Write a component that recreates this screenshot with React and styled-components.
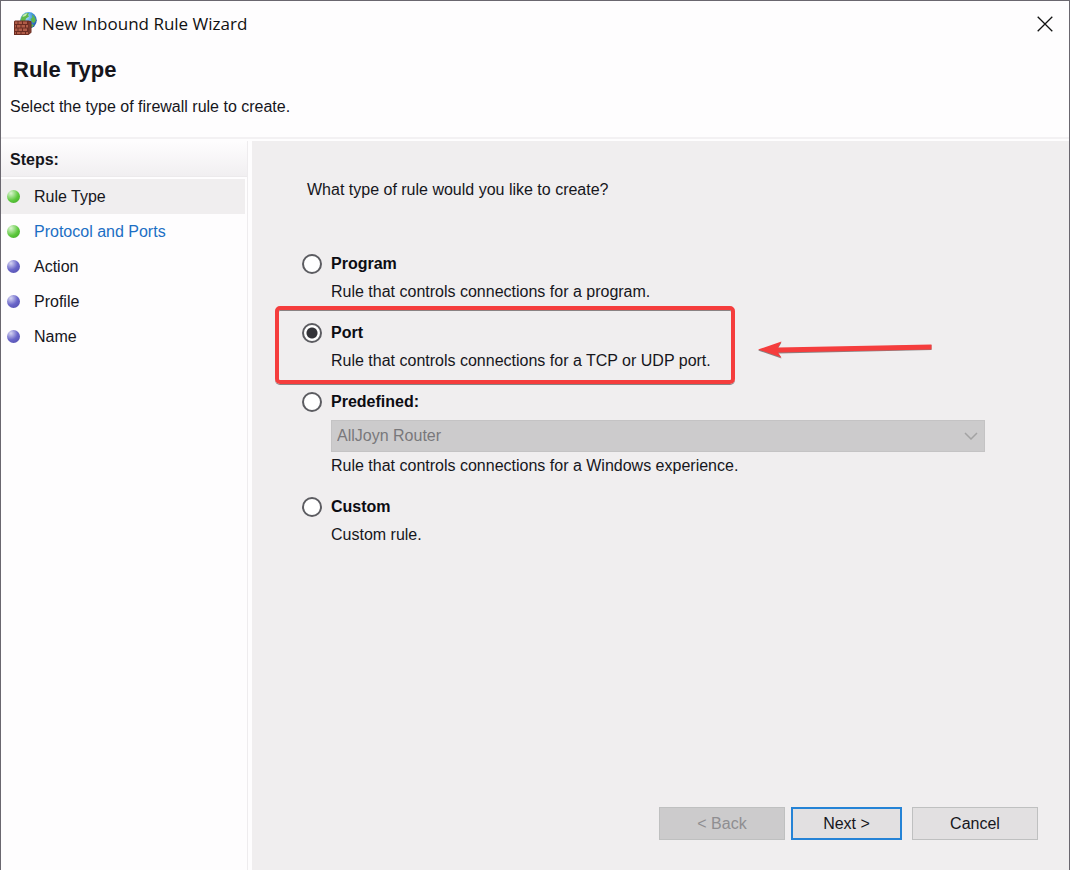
import React, { useState } from 'react';
import styled, { createGlobalStyle } from 'styled-components';

const STEPS = [
  { name: 'Rule Type', done: true, current: true },
  { name: 'Protocol and Ports', done: true, link: true },
  { name: 'Action' },
  { name: 'Profile' },
  { name: 'Name' },
];

const AppIcon = () => (
  <svg width="24" height="24" viewBox="0 0 24 24" aria-hidden="true">
    <defs>
      <radialGradient id="globe" cx="0.35" cy="0.3" r="0.8">
        <stop offset="0" stopColor="#b9e6fb" />
        <stop offset="0.45" stopColor="#4a9fe0" />
        <stop offset="1" stopColor="#1a4ba6" />
      </radialGradient>
    </defs>
    <circle cx="15.500" cy="8.300" r="8.300" fill="url(#globe)" />
    <path d="M9 4c2-2.500 5-3.500 7-3l-1 2 1 1.500-3 2-1 3-3 .5-1.500-2zM19 2.500c2 1.200 3.500 3.500 3.800 6l-1.800 2.500-2-1-1.500-3 2-1.500zM18 12l3 1-2.500 3z" fill="#5fb84a" />
    <path d="M10 3.500c1.500-1.500 3-2 4.500-2l-2 2.500-3 1z" fill="#c9efb5" />
    <path d="M2 8.500h13.500l3 1v11l-3 2.500H1V9.500z" fill="#6b2c22" />
    <g fill="#b05c48">
      <path d="M2 9.500h2.500v2.500H2zM5.500 9.500h3.500v2.500H5.500zM10 9.500h4v2.500h-4z" />
      <path d="M2 13h1v2.500H2zM4 13h3.500v2.500H4zM8.500 13H12v2.500H8.500zM13 13h2v2.500h-2z" />
      <path d="M2 16.500h2.500V19H2zM5.500 16.500h3.500V19H5.500zM10 16.500h4V19h-4z" />
      <path d="M2 20h1v2H2zM4 20h3.500v2H4zM8.500 20H12v2H8.500zM13 20h2v2h-2z" />
    </g>
    <path d="M15.500 9.500l2.500.8v10.200l-2.500 2z" fill="#7c3b2e" />
  </svg>
);

const CloseIcon = () => (
  <svg width="16" height="16" viewBox="0 0 16 16" aria-hidden="true">
    <path d="M.7.700l14.600 14.600M15.300.7L.7 15.300" stroke="#111" strokeWidth="1.300" fill="none" />
  </svg>
);

const Chevron = () => (
  <ChevronSvg width="14" height="8" viewBox="0 0 14 8" aria-hidden="true">
    <path d="M1 1l6 6 6-6" stroke="#a3a3a3" strokeWidth="1.500" fill="none" />
  </ChevronSvg>
);

const Arrow = () => (
  <ArrowSvg width="176" height="20" viewBox="0 0 176 20" aria-hidden="true">
    <path d="M1 10.500L24.500 2.500 21 8.500 174.500 5v5L21 13.500 24.500 18.500z" fill="#8a8283" />
    <path d="M1 9.500L24.500 1.500 21 7.500 174.500 4.500v5L21 12.500 24.500 17.500z" fill="#f53d3d" />
  </ArrowSvg>
);

const Option = ({ id, title, text, value, onPick, gap, children, marked }) => (
  <OptionBox $marked={marked}>
    <OptionHead>
      <Radio
        type="radio"
        name="rule"
        id={id}
        checked={value === id}
        onChange={() => onPick(id)}
        aria-describedby={`${id}-text`}
      />
      <OptionTitle htmlFor={id}>{title}</OptionTitle>
    </OptionHead>
    {children}
    <OptionText id={`${id}-text`} $gap={gap}>{text}</OptionText>
    {marked && <Highlight />}
    {marked && <Arrow />}
  </OptionBox>
);

const App = () => {
  const [rule, setRule] = useState('port');

  return (
    <>
      <GlobalStyle />
      <Wizard>
        <Header>
          <TitleBar>
            <AppIcon />
            <WindowTitle>New Inbound Rule Wizard</WindowTitle>
            <CloseButton type="button" aria-label="Close"><CloseIcon /></CloseButton>
          </TitleBar>
          <Heading>Rule Type</Heading>
          <Subtitle>Select the type of firewall rule to create.</Subtitle>
        </Header>
        <Body>
          <Sidebar>
            <StepsTitle>Steps:</StepsTitle>
            <StepList>
              {STEPS.map(step => (
                <Step key={step.name} $current={step.current}>
                  <Bullet $done={step.done} />
                  {step.link ? <StepLink href="#ports">{step.name}</StepLink> : step.name}
                </Step>
              ))}
            </StepList>
          </Sidebar>
          <Main>
            <Question>What type of rule would you like to create?</Question>
            <Options role="radiogroup" aria-label="Rule type">
              <Option id="program" title="Program" text="Rule that controls connections for a program." value={rule} onPick={setRule} gap={8} />
              <Option id="port" title="Port" text="Rule that controls connections for a TCP or UDP port." value={rule} onPick={setRule} gap={8} marked />
              <Option id="predefined" title="Predefined:" text="Rule that controls connections for a Windows experience." value={rule} onPick={setRule} gap={4}>
                <SelectWrap>
                  <Select disabled aria-label="Predefined rule">
                    <option>AllJoyn Router</option>
                  </Select>
                  <Chevron />
                </SelectWrap>
              </Option>
              <Option id="custom" title="Custom" text="Custom rule." value={rule} onPick={setRule} gap={8} />
            </Options>
            <Footer>
              <Button type="button" disabled>&lt; Back</Button>
              <Button type="button" $primary>Next &gt;</Button>
              <Button type="button">Cancel</Button>
            </Footer>
          </Main>
        </Body>
      </Wizard>
    </>
  );
};

export default App;

const GlobalStyle = createGlobalStyle`
  * {
    box-sizing: border-box;
  }
  body {
    margin: 0;
    font-family: "Liberation Sans", Arial, sans-serif;
    font-size: 16px;
    line-height: 20px;
    color: #16161c;
  }
  button, select {
    font: inherit;
  }
`

const Wizard = styled.div`
  display: flex;
  flex-direction: column;
  min-height: 100vh;
  background: #fefdfe;
  border: 1px solid #6a676f;
  border-bottom: 0;
`

const Header = styled.header`
  padding-bottom: 20px;
  border-bottom: 2px solid #f3f1f3;
`

const TitleBar = styled.div`
  display: flex;
  align-items: center;
  height: 46px;
  padding: 0 16px 0 12px;
`

const WindowTitle = styled.span`
  flex: 1;
  margin-left: 5px;
  font-family: "Open Sans", "Segoe UI", sans-serif;
  font-size: 17px;
  line-height: 24px;
  color: #111;
`

const CloseButton = styled.button`
  display: flex;
  padding: 0;
  border: 0;
  background: none;
`

const Heading = styled.h1`
  margin: 10px 12px 0;
  font-size: 22px;
  line-height: 26px;
`

const Subtitle = styled.p`
  margin: 14px 9px 0;
`

const Body = styled.div`
  display: flex;
  flex: 1;
  padding-top: 2px;
`

const Sidebar = styled.nav`
  width: 247px;
  margin-right: 4px;
  border-right: 1px solid #eeecee;
`

const StepsTitle = styled.h2`
  margin: 0 0 2px;
  padding: 9px 9px 6px;
  border-bottom: 1px solid #eceaec;
  background: linear-gradient(#fefdfe, #f1eff1);
  font-size: 16px;
  line-height: 20px;
`

const StepList = styled.ol`
  margin: 0 2px 0 0;
  padding: 0;
  list-style: none;
`

const Step = styled.li`
  display: flex;
  align-items: center;
  height: 35px;
  padding-left: 6px;
  background: ${props => props.$current ? '#f0eeef' : 'transparent'};
`

const Bullet = styled.span`
  width: 13px;
  height: 13px;
  margin-right: 14px;
  border-radius: 50%;
  background: ${props => props.$done
    ? 'radial-gradient(circle at 30% 25%, #dcf5d2 0, #5cc83c 55%, #3da325 100%)'
    : 'radial-gradient(circle at 30% 25%, #d6d5f2 0, #6a66c9 50%, #4d49a8 100%)'};
`

const StepLink = styled.a`
  color: #1c6fc4;
  text-decoration: none;
`

const Main = styled.main`
  display: flex;
  flex: 1;
  flex-direction: column;
  padding: 39px 31px 30px 50px;
  background: #f0eeef;
`

const Question = styled.p`
  margin: 0 0 54px 5px;
`

const Options = styled.div`
  display: flex;
  flex: 1;
  flex-direction: column;
  gap: 21px;
  margin-right: 53px;
`

const OptionBox = styled.div`
  position: relative;
  width: ${props => props.$marked ? 'fit-content' : 'auto'};
`

const OptionHead = styled.div`
  display: flex;
  align-items: center;
  gap: 9px;
`

const Radio = styled.input`
  appearance: none;
  width: 20px;
  height: 20px;
  margin: 0;
  border: 2px solid #5c5c61;
  border-radius: 50%;
  background: #fff;
  &:checked {
    background: radial-gradient(circle, #333338 5px, #fff 6px);
  }
`

const OptionTitle = styled.label`
  font-weight: bold;
  color: #0c0c12;
`

const OptionText = styled.p`
  margin: ${props => props.$gap}px 0 0 29px;
`

const Highlight = styled.div`
  position: absolute;
  inset: -17px -24px -13px -27px;
  border: 4px solid #f53d3d;
  border-radius: 5px;
  box-shadow: 0 1px 0 #8a8283, inset 0 1px 0 #8a8283;
  pointer-events: none;
`

const ArrowSvg = styled.svg`
  position: absolute;
  top: 17px;
  left: calc(100% + 46px);
`

const SelectWrap = styled.div`
  position: relative;
  margin: 8px 0 0 29px;
`

const Select = styled.select`
  appearance: none;
  display: block;
  width: 100%;
  height: 32px;
  padding: 0 5px;
  border: 1px solid #c4c3c4;
  border-radius: 0;
  background: #cccbcc;
  color: #79787b;
  opacity: 1;
`

const ChevronSvg = styled.svg`
  position: absolute;
  top: 12px;
  right: 7px;
`

const Footer = styled.footer`
  display: flex;
  justify-content: flex-end;
`

const Button = styled.button`
  width: ${props => props.$primary ? 111 : 126}px;
  height: 33px;
  margin-left: ${props => props.$primary ? 6 : 10}px;
  padding: 0;
  border: ${props => props.$primary ? '2px solid #2583d6' : '1px solid #bfc0c0'};
  background: #e2e0e1;
  color: #16161c;
  &:disabled {
    background: #cccbcc;
    color: #8f8e91;
  }
`
